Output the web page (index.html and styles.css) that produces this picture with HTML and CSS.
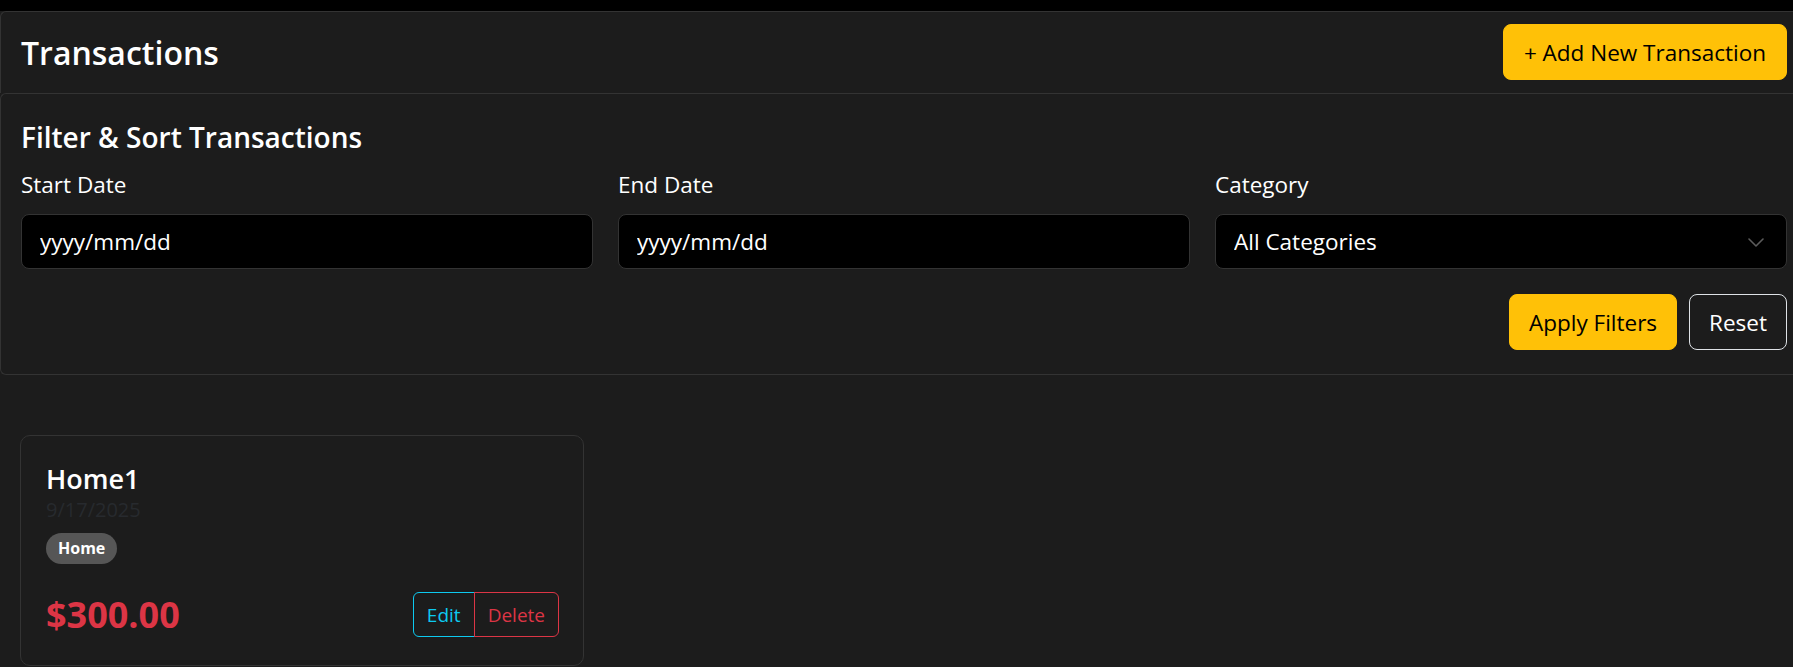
FILE: index.html
```html
<!DOCTYPE html>
<html lang="en">
<head>
<meta charset="utf-8">
<title>Transactions</title>
<link rel="stylesheet" href="styles.css">
</head>
<body>
<div class="page">
  <header class="panel header">
    <h1 class="title">Transactions</h1>
    <button class="btn btn-warning btn-add">+ Add New Transaction</button>
  </header>

  <section class="panel filters">
    <h2 class="filters-title">Filter &amp; Sort Transactions</h2>
    <div class="filter-grid">
      <div class="field">
        <label class="label">Start Date</label>
        <input class="control" type="text" placeholder="yyyy/mm/dd">
      </div>
      <div class="field">
        <label class="label">End Date</label>
        <input class="control" type="text" placeholder="yyyy/mm/dd">
      </div>
      <div class="field">
        <label class="label">Category</label>
        <div class="select-wrap">
          <select class="control select">
            <option>All Categories</option>
          </select>
          <svg class="chevron" width="16" height="9" viewBox="0 0 16 9" fill="none">
            <path d="M1 1l7 7 7-7" stroke="#5c5c5c" stroke-width="1.6" stroke-linecap="round" stroke-linejoin="round"/>
          </svg>
        </div>
      </div>
    </div>
    <div class="filter-actions">
      <button class="btn btn-warning">Apply Filters</button>
      <button class="btn btn-outline">Reset</button>
    </div>
  </section>

  <main class="list">
    <article class="tx-card">
      <h3 class="tx-title">Home1</h3>
      <div class="tx-date">9/17/2025</div>
      <span class="badge">Home</span>
      <div class="tx-footer">
        <div class="tx-amount">$300.00</div>
        <div class="btn-group">
          <button class="btn-sm btn-edit">Edit</button>
          <button class="btn-sm btn-delete">Delete</button>
        </div>
      </div>
    </article>
  </main>
</div>
</body>
</html>
```

FILE: styles.css
```css
* { box-sizing: border-box; }

html, body {
  margin: 0;
  height: 100%;
  overflow: hidden;
}

body {
  background: #000;
  color: #fff;
  font-family: "Open Sans", "Noto Sans", sans-serif;
}

.page {
  margin-top: 11px;
  min-height: 100%;
  background: #1c1c1c;
}

.panel {
  background: #1c1c1c;
  border: 1px solid #333;
  border-right: 0;
  border-radius: 6px 0 0 6px;
}

.header {
  display: flex;
  align-items: center;
  justify-content: space-between;
  padding: 12px 6px 13px 20px;
  border-bottom: 0;
  border-radius: 6px 0 0 0;
}

.title {
  margin: 0;
  padding-top: 2px;
  font-size: 32px;
  line-height: 40px;
  font-weight: 600;
}

.btn {
  height: 56px;
  padding: 0 19px;
  border: 1px solid transparent;
  border-radius: 8px;
  font-family: inherit;
  font-size: 22.5px;
  cursor: pointer;
}

.btn-add {
  padding: 0 20px;
}

.btn-warning {
  background: #ffc107;
  border-color: #ffc107;
  color: #000;
}

.btn-outline {
  background: transparent;
  border-color: #dee2e6;
  color: #fff;
}

.filters {
  padding: 25px 6px 24px 20px;
}

.filters-title {
  margin: 0 0 12px;
  font-size: 28px;
  line-height: 36px;
  font-weight: 600;
}

.filter-grid {
  display: grid;
  grid-template-columns: repeat(3, 1fr);
  column-gap: 25px;
}

.label {
  display: block;
  font-size: 22.5px;
  line-height: 36px;
  margin-bottom: 11px;
}

.control {
  display: block;
  width: 100%;
  height: 55px;
  padding: 0 18px;
  background: #000;
  border: 1px solid #333;
  border-radius: 8px;
  color: #fff;
  font-family: inherit;
  font-size: 22.5px;
  outline: none;
}

.control::placeholder {
  color: #fff;
  opacity: 1;
}

.select-wrap {
  position: relative;
}

.select {
  appearance: none;
  -webkit-appearance: none;
}

.chevron {
  position: absolute;
  right: 23px;
  top: 24px;
  pointer-events: none;
}

.filter-actions {
  display: flex;
  justify-content: flex-end;
  gap: 12px;
  margin-top: 25px;
}

.list {
  padding: 60px 20px 0;
}

.tx-card {
  width: 564px;
  padding: 26px 24px 28px 25px;
  border: 1px solid #333;
  border-radius: 10px;
  background: #1c1c1c;
}

.tx-title {
  margin: 0;
  font-size: 27px;
  line-height: 34px;
  font-weight: 600;
}

.tx-date {
  font-size: 20px;
  line-height: 28px;
  color: #272a2e;
}

.badge {
  display: inline-block;
  margin-top: 9px;
  padding: 0 12px;
  height: 31px;
  line-height: 31px;
  border-radius: 16px;
  background: #565656;
  color: #fff;
  font-size: 16px;
  font-weight: 700;
}

.tx-footer {
  display: flex;
  align-items: center;
  justify-content: space-between;
  margin-top: 28px;
}

.tx-amount {
  color: #dc3545;
  font-size: 36px;
  line-height: 44px;
  font-weight: 700;
}

.btn-group {
  display: flex;
}

.btn-sm {
  height: 45px;
  padding: 0 13px;
  background: transparent;
  font-family: inherit;
  font-size: 19px;
  border: 1px solid;
  cursor: pointer;
}

.btn-edit {
  color: #0dcaf0;
  border-color: #0dcaf0;
  border-radius: 6px 0 0 6px;
}

.btn-delete {
  color: #dc3545;
  border-color: #dc3545;
  border-radius: 0 6px 6px 0;
  margin-left: -1px;
}
```
